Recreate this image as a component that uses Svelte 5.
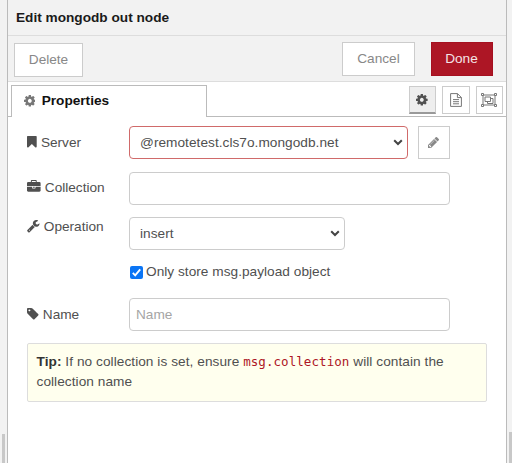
<script>
  const icons = {
    cog: ['128 0 1536 1792', 'M1152 896q0-106-75-181t-181-75-181 75-75 181 75 181 181 75 181-75 75-181zm512-109v222q0 12-8 23t-20 13l-185 28q-19 54-39 91 35 50 107 138 10 12 10 25t-9 23q-27 37-99 108t-94 71q-12 0-26-9l-138-108q-44 23-91 38-16 136-29 186-7 28-36 28h-222q-14 0-24.5-8.5t-11.5-21.5l-28-184q-49-16-90-37l-141 107q-10 9-25 9-14 0-25-11-126-114-165-168-7-10-7-23 0-12 8-23 15-21 51-66.500t54-70.500q-27-50-41-99l-183-27q-13-2-21-12.500t-8-23.500v-222q0-12 8-23t19-13l186-28q14-46 39-92-40-57-107-138-10-12-10-24 0-10 9-23 26-36 98.500-107.500t94.500-71.500q13 0 26 10l138 107q44-23 91-38 16-136 29-186 7-28 36-28h222q14 0 24.500 8.500t11.500 21.500l28 184q49 16 90 37l142-107q9-9 24-9 13 0 25 10 129 119 165 170 7 8 7 22 0 12-8 23-15 21-51 66.500t-54 70.500q26 50 41 98l183 28q13 2 21 12.500t8 23.500z'],
    bookmark: ['256 0 1280 1792', 'M1420 128q23 0 44 9 33 13 52.500 41t19.500 62v1289q0 34-19.500 62t-52.500 41q-19 8-44 8-48 0-83-32l-441-424-441 424q-36 33-83 33-23 0-44-9-33-13-52.500-41t-19.500-62v-1289q0-34 19.500-62t52.500-41q21-9 44-9h1048z'],
    briefcase: ['0 0 1792 1792', 'M640 256h512v-128h-512v128zm1152 640v480q0 66-47 113t-113 47h-1472q-66 0-113-47t-47-113v-480h672v160q0 26 19 45t45 19h320q26 0 45-19t19-45v-160h672zm-768 0v128h-256v-128h256zm768-480v384h-1792v-384q0-66 47-113t113-47h352v-160q0-40 28-68t68-28h576q40 0 68 28t28 68v160h352q66 0 113 47t47 113z'],
    wrench: ['64 0 1664 1792', 'M448 1472q0-26-19-45t-45-19-45 19-19 45 19 45 45 19 45-19 19-45zm644-420l-682 682q-37 37-90 37-52 0-91-37l-106-108q-38-36-38-90 0-53 38-91l681-681q39 98 114.500 173.500t173.500 114.500zm634-435q0 39-23 106-47 134-164.500 217.500t-258.500 83.500q-185 0-316.500-131.500t-131.500-316.500 131.500-316.500 316.500-131.500q58 0 121.500 16.500t107.500 46.500q16 11 16 28t-16 28l-293 169v224l193 107q5-3 79-48.500t135.500-81 70.500-35.500q15 0 23.500 10t8.500 25z'],
    tag: ['128 0 1536 1792', 'M576 448q0-53-37.500-90.500t-90.500-37.500-90.500 37.500-37.500 90.500 37.500 90.500 90.500 37.500 90.500-37.500 37.500-90.500zm1067 576q0 53-37 90l-491 492q-39 37-91 37-53 0-90-37l-715-716q-38-37-64.500-101t-26.500-117v-416q0-52 38-90t90-38h416q53 0 117 26.500t102 64.500l715 714q37 39 37 91z'],
    pencil: ['128 0 1536 1792', 'M491 1536l91-91-235-235-91 91v107h128v128h107zm523-928q0-22-22-22-10 0-17 7l-542 542q-7 7-7 17 0 22 22 22 10 0 17-7l542-542q7-7 7-17zm-54-192l416 416-832 832h-416v-416zm683 96q0 53-37 90l-166 166-416-416 166-165q36-38 90-38 53 0 91 38l235 234q37 39 37 91z']
  };
</script>

{#snippet icon(name)}
  <svg class="icon" viewBox={icons[name][0]} aria-hidden="true"><path d={icons[name][1]} /></svg>
{/snippet}

{#snippet chevron()}
  <svg class="chevron" viewBox="0 0 10 7" aria-hidden="true"><path d="M1.2 1.2 5 5l3.8-3.8" /></svg>
{/snippet}

<div class="page">
  <div class="gutter left"><div class="thumb"></div></div>
  <main class="tray">
    <header>Edit mongodb out node</header>
    <div class="toolbar">
      <button class="btn delete">Delete</button>
      <button class="btn cancel">Cancel</button>
      <button class="btn done">Done</button>
    </div>
    <nav>
      <div class="tab">{@render icon('cog')}<span>Properties</span></div>
      <div class="tools">
        <button class="tool active" aria-label="Properties">{@render icon('cog')}</button>
        <button class="tool" aria-label="Description">
          <svg class="line" width="12" height="14" viewBox="0 0 12 14">
            <path d="M.6.6h6.900l3.900 3.900v8.900H.6zM7.400.6v4h4M3 6.600h6M3 8.700h6M3 10.800h6" />
          </svg>
        </button>
        <button class="tool" aria-label="Appearance">
          <svg class="line" width="16" height="14" viewBox="0 0 16 14">
            <path d="M2 2h12v10H2zM4 4h5.500v4.500H4zM9.500 5.500H12V10.500H6.500V8.500" />
            <path class="knob" d="M.5.5h2v2h-2zM13.500.5h2v2h-2zM.5 11.500h2v2h-2zM13.500 11.500h2v2h-2z" />
          </svg>
        </button>
      </div>
    </nav>
    <section class="form">
      <div class="row server">
        <span class="label">{@render icon('bookmark')} Server</span>
        <div class="field select invalid"><span>@remotetest.cls7o.mongodb.net</span>{@render chevron()}</div>
        <button class="edit" aria-label="Edit server">{@render icon('pencil')}</button>
      </div>
      <div class="row collection">
        <span class="label">{@render icon('briefcase')} Collection</span>
        <input class="field" type="text" aria-label="Collection" />
      </div>
      <div class="row operation">
        <span class="label">{@render icon('wrench')} Operation</span>
        <div class="field select short"><span>insert</span>{@render chevron()}</div>
      </div>
      <div class="check">
        <svg width="13" height="13" viewBox="0 0 13 13" aria-hidden="true">
          <rect width="13" height="13" rx="2" fill="#0b75f5" />
          <path d="M2.800 6.900 5.200 9.300 10.200 3.400" fill="none" stroke="#fff" stroke-width="1.900" />
        </svg>
        <span>Only store msg.payload object</span>
      </div>
      <div class="row name">
        <span class="label">{@render icon('tag')} Name</span>
        <input class="field" type="text" placeholder="Name" />
      </div>
      <div class="tip"><b>Tip:</b> If no collection is set, ensure <code>msg.collection</code> will contain the collection name</div>
    </section>
  </main>
  <div class="gutter right"><div class="thumb"></div></div>
</div>

<style>
  .page {
    display: flex;
    width: 512px;
    height: 463px;
    overflow: hidden;
    background: #f2f2f2;
    color: #505050;
    font: 13.65px/20px "Liberation Sans", Arial, sans-serif;
  }
  .page * { box-sizing: border-box; }
  button, input { margin: 0; font: inherit; }
  .gutter { display: flex; align-items: flex-end; }
  .left { width: 7px; padding-left: 2px; }
  .right { width: 5px; padding-left: 2px; }
  .thumb { width: 3px; height: 29px; background: #c8c8c8; }
  .right .thumb { height: 31px; }
  .tray {
    width: 500px;
    border: solid #bbb;
    border-width: 0 1px;
    background: #fff;
  }
  header {
    height: 36px;
    padding: 8px 8px 0;
    border-bottom: 1px solid #ddd;
    background: #f2f2f2;
    color: #1a1a1a;
    font-weight: bold;
  }
  .toolbar {
    display: flex;
    align-items: flex-start;
    height: 46px;
    padding: 6px 13px 0 6px;
    border-bottom: 1px solid #ddd;
    background: #f2f2f2;
  }
  .btn {
    height: 34px;
    padding: 0;
    border: 1px solid #ccc;
    background: #fff;
    color: #888;
  }
  .delete { width: 69px; margin-top: 1px; }
  .cancel { width: 73px; margin-left: auto; }
  .done {
    width: 62px;
    margin-left: 16px;
    padding-right: 1px;
    border-color: #a51020;
    background: #ad1625;
    color: #f4e4e6;
  }
  nav {
    display: flex;
    justify-content: space-between;
    height: 35px;
    padding: 3px 3px 0;
    border-bottom: 1px solid #bbb;
  }
  .tab {
    display: flex;
    align-items: center;
    gap: 6.500px;
    width: 196px;
    height: 32px;
    padding: 0 0 2px 11.500px;
    border: 1px solid #bbb;
    border-bottom: 0;
    background: #fff;
    color: #111;
    font-weight: bold;
  }
  .tab .icon { fill: #777; }
  .tools { display: flex; gap: 6px; padding-top: 1px; }
  .tool {
    display: flex;
    align-items: center;
    justify-content: center;
    width: 27.500px;
    height: 28px;
    padding: 0;
    border: 1px solid #ccc;
    background: #fff;
  }
  .active { border-bottom: 2px solid #999; background: #eee; }
  .icon {
    height: 13.600px;
    vertical-align: -1.900px;
    fill: #505050;
  }
  .line { fill: none; stroke: #777; stroke-width: 1; }
  .line .knob { fill: #fff; }
  .form { padding: 9px 19px 0; }
  .row { display: flex; height: 33px; }
  .label { width: 102px; padding: 7px 0 0 .4px; white-space: nowrap; }
  .field {
    width: 321px;
    height: 33px;
    padding: 0 6px;
    border: 1px solid #ccc;
    border-radius: 4px;
    outline: 0;
    background: #fff;
    color: #505050;
  }
  .field::placeholder { color: #a5a5a5; opacity: 1; }
  .select {
    display: flex;
    align-items: center;
    justify-content: space-between;
    padding: 0 4px 0 10px;
  }
  .select span { letter-spacing: .04px; }
  .short { width: 216px; }
  .invalid { width: 279px; border-color: #d06a6a; }
  .chevron { width: 10px; height: 7px; fill: none; stroke: #444; stroke-width: 2; }
  .edit {
    display: flex;
    align-items: center;
    justify-content: center;
    width: 32px;
    height: 33px;
    margin-left: 10px;
    padding: 0;
    border: 1px solid #ccc;
    background: #fff;
  }
  .edit .icon { height: 13px; fill: #888; }
  .collection { margin-top: 13px; }
  .collection .label { padding-top: 6px; }
  .operation { margin-top: 12px; }
  .operation .label { padding-top: 0; }
  .check {
    display: flex;
    align-items: center;
    gap: 3.500px;
    height: 20px;
    margin: 12px 0 0 102.500px;
  }
  .check span { letter-spacing: .03px; }
  .name { margin-top: 16px; }
  .name .label { padding-top: 7px; }
  .tip {
    width: 460px;
    height: 59px;
    margin-top: 12px;
    padding: 8px 8px 0 8.500px;
    border: 1px solid #ddd;
    border-radius: 2px;
    background: #ffffee;
    letter-spacing: .06px;
  }
  .tip b { color: #333; }
  code { color: #ad1625; font: 12.500px/18px "DejaVu Sans Mono", monospace; }
</style>
